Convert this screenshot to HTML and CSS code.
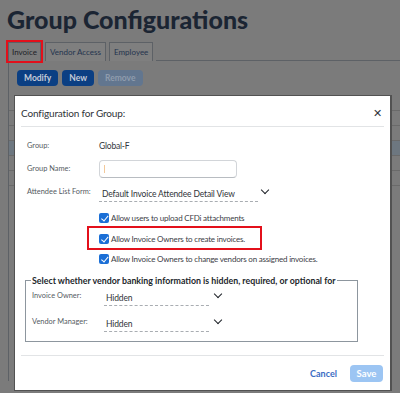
FILE: index.html
```html
<!DOCTYPE html>
<html lang="en">
<head>
    <meta charset="UTF-8">
    <meta name="viewport" content="width=device-width, initial-scale=1.0">
    <title>Group Configurations</title>
    <link rel="stylesheet" href="styles.css">
</head>
<body>
    <div class="page">
        <h1>Group Configurations</h1>
        <div class="tabs">
            <div class="tab active">Invoice<span class="mark mark-tab"></span></div>
            <div class="tab">Vendor Access</div>
            <div class="tab">Employee</div>
            <div class="tab-rest"></div>
        </div>
        <div class="panel">
            <div class="toolbar">
                <button class="btn">Modify</button>
                <button class="btn">New</button>
                <button class="btn disabled">Remove</button>
            </div>
            <div class="table">
                <div class="trow"></div>
                <div class="trow"></div>
                <div class="trow"></div>
                <div class="trow hl"></div>
                <div class="trow"></div>
                <div class="trow"></div>
            </div>
        </div>
    </div>

    <div class="modal">
        <div class="modal-head">
            <span class="modal-title">Configuration for Group:</span>
            <span class="close">&#x2715;</span>
        </div>
        <div class="form">
            <div class="row">
                <span class="label">Group:</span>
                <span class="value">Global-F</span>
            </div>
            <div class="row">
                <span class="label">Group Name:</span>
                <div class="input"><span class="caret"></span></div>
            </div>
            <div class="row">
                <span class="label">Attendee List Form:</span>
                <div class="select wide">Default Invoice Attendee Detail View</div>
                <span class="chev"></span>
            </div>
            <div class="checks">
                <label class="check"><span class="box"></span>Allow users to upload CFDi attachments</label>
                <label class="check">
                    <span class="box"></span>Allow Invoice Owners to create invoices.
                    <span class="mark mark-check"></span>
                </label>
                <label class="check"><span class="box"></span>Allow Invoice Owners to change vendors on assigned invoices.</label>
            </div>
            <fieldset class="group">
                <legend>Select whether vendor banking information is hidden, required, or optional for</legend>
                <div class="row sub first">
                    <span class="label">Invoice Owner:</span>
                    <div class="select">Hidden</div>
                    <span class="chev"></span>
                </div>
                <div class="row sub">
                    <span class="label">Vendor Manager:</span>
                    <div class="select">Hidden</div>
                    <span class="chev"></span>
                </div>
            </fieldset>
        </div>
        <div class="modal-foot">
            <span class="link">Cancel</span>
            <button class="save">Save</button>
        </div>
    </div>
</body>
</html>
```

FILE: styles.css
```css
body {
    margin: 0;
    height: 393px;
    background-color: #7b7b7b;
    font-family: Lato, "Open Sans", sans-serif;
    overflow: hidden;
}
.page {
    padding: 4px 0 0 8px;
}
h1 {
    margin: 0 0 0 -1px;
    font-size: 25px;
    font-weight: 900;
    color: #1b2533;
    line-height: 30px;
}
.tabs {
    display: flex;
    align-items: flex-end;
    margin-top: 8px;
    height: 19px;
}
.tab {
    position: relative;
    height: 18px;
    line-height: 18px;
    padding: 0 4px;
    margin-right: 3px;
    border: 1px solid #5d6166;
    border-bottom: none;
    font-size: 8px;
    color: #24344e;
    background: #7f7f7f;
}
.tab.active {
    padding: 0 3px;
    margin-right: 4px;
    color: #1e2228;
    background: #7b7b7b;
}
.tab-rest {
    flex: 1;
    border-bottom: 1px solid #5d6166;
}
.panel {
    border-left: 1px solid #5d6166;
    height: 320px;
}
.toolbar {
    display: flex;
    gap: 4px;
    padding: 9px 0 0 8px;
}
.btn {
    height: 16px;
    padding: 0 7px;
    border: none;
    border-radius: 4px;
    background: #0b3f83;
    color: #c4ccd8;
    font-family: inherit;
    font-size: 8.5px;
    font-weight: 700;
}
.btn.disabled {
    background: #62768f;
    color: #8f9cad;
}
.table {
    margin-top: 10px;
}
.trow {
    height: 14px;
    border-bottom: 1px solid #6a6a6a;
}
.trow.hl {
    background: #6d7780;
}
.mark {
    position: absolute;
    border: 2px solid #e3101b;
}
.mark-tab {
    left: -3px;
    top: -3px;
    right: -3px;
    bottom: -2px;
}

/* dialog */
.modal {
    position: absolute;
    left: 14px;
    top: 95px;
    width: 378px;
    height: 296px;
    box-sizing: border-box;
    background: #fff;
    border: 1px solid #525252;
    border-right-width: 2px;
    display: flex;
    flex-direction: column;
}
.modal-head {
    display: flex;
    justify-content: space-between;
    align-items: center;
    height: 30px;
    margin: 0 6px;
    border-bottom: 1px solid #e2e4e6;
}
.modal-title {
    font-size: 10px;
    letter-spacing: -0.15px;
    color: #2f3338;
    padding-top: 3px;
}
.close {
    font-size: 11px;
    color: #30343a;
    padding: 3px 2px 0 0;
}
.form {
    padding: 7px 0 0 12px;
    flex: 1;
}
.row {
    display: flex;
    align-items: center;
    height: 23px;
}
.label {
    width: 72px;
    flex-shrink: 0;
    font-size: 7.4px;
    white-space: nowrap;
    color: #555b62;
}
.value {
    font-size: 8.5px;
    letter-spacing: -0.2px;
    color: #32363b;
}
.input {
    width: 136px;
    height: 16px;
    border: 1px solid #d2d5d9;
    border-bottom-color: #b8bcc1;
    border-radius: 4px;
    position: relative;
}
.caret {
    position: absolute;
    left: 4px;
    top: 4px;
    width: 1px;
    height: 8px;
    background: #f3c99a;
}
.select {
    font-size: 8.5px;
    letter-spacing: -0.15px;
    white-space: nowrap;
    color: #2f3338;
    padding: 2px 0 2px 3px;
    border-bottom: 1px dashed #a9adb2;
    margin-top: 6px;
}
.select.wide {
    width: 156px;
}
.chev {
    width: 5px;
    height: 5px;
    border-right: 1.5px solid #1e2228;
    border-bottom: 1.5px solid #1e2228;
    transform: rotate(45deg);
    margin: 0 0 3px 6px;
}
.row .select.wide + .chev {
    margin-left: 4px;
}
.checks {
    padding: 5px 0 0 72px;
}
.check {
    position: relative;
    display: flex;
    align-items: center;
    height: 20.5px;
    font-size: 8px;
    letter-spacing: -0.2px;
    white-space: nowrap;
    color: #3c4046;
}
.box {
    width: 10px;
    height: 10px;
    margin-right: 2px;
    border-radius: 2px;
    background: #1b6fd6;
    position: relative;
}
.box::after {
    content: "";
    position: absolute;
    left: 3.5px;
    top: 1px;
    width: 2.5px;
    height: 5.5px;
    border-right: 1.5px solid #fff;
    border-bottom: 1.5px solid #fff;
    transform: rotate(40deg);
}
.mark-check {
    left: -12px;
    top: -3px;
    width: 171px;
    height: 20px;
}
.group {
    margin: 5px 0 0 -2px;
    width: 333px;
    height: 67px;
    box-sizing: border-box;
    padding: 0 0 0 6px;
    border: 1px solid #8d969e;
}
.group legend {
    padding: 0 1px;
    font-size: 8.8px;
    font-weight: 700;
    white-space: nowrap;
    color: #23272c;
    margin-left: -1px;
}
.row.sub {
    height: 26px;
}
.row.sub.first {
    margin-top: -3px;
}
.row.sub .select {
    width: 103px;
    padding-left: 2px;
}
.modal-foot {
    display: flex;
    justify-content: flex-end;
    align-items: center;
    gap: 13px;
    height: 34px;
    margin: 0 6px 0 6px;
    padding: 0 1px 0 0;
    border-top: 1px solid #e2e4e6;
}
.link {
    font-size: 9px;
    font-weight: 700;
    color: #3a6cc3;
}
.save {
    width: 33px;
    height: 17px;
    border: none;
    border-radius: 4px;
    background: #9cc5f3;
    color: #fff;
    font-family: inherit;
    font-size: 9.5px;
    font-weight: 700;
}
```
